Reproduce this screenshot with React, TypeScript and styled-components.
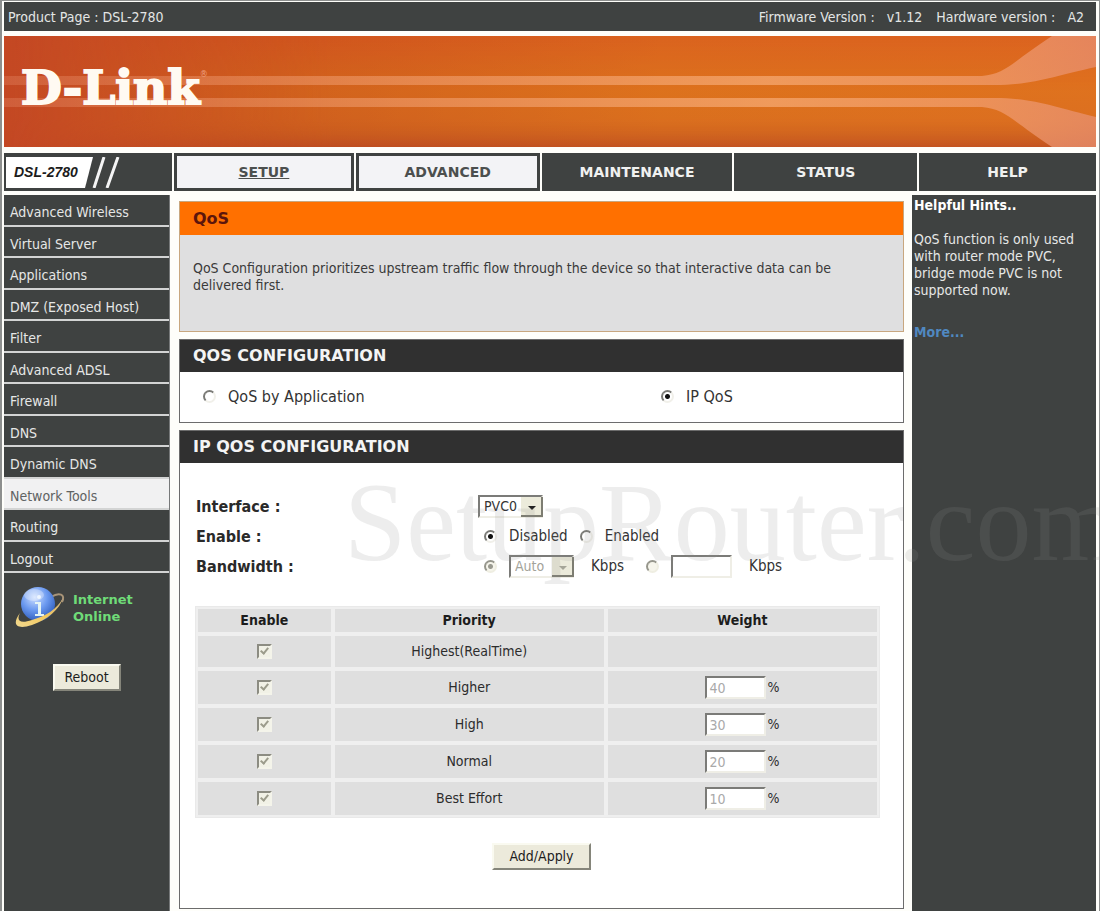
import React, { useState } from 'react';
import styled, { createGlobalStyle, css } from 'styled-components';

const ui = `"DejaVu Sans Condensed", Tahoma, "Noto Sans", sans-serif`;
const wide = `"DejaVu Sans", Verdana, sans-serif`;
const slate = '#3f4241';

const GlobalStyle = createGlobalStyle`
  *, *::before, *::after { box-sizing: border-box; }
  body { margin: 0; background: #fefefa; font: 14px/17px ${ui}; color: #333; }
  button, input, select { font: inherit; margin: 0; }
`;

const Page = styled.div`
  position: relative;
  display: flex;
  flex-direction: column;
  min-height: 100vh;
  overflow: hidden;
  padding: 1px 3px 0 2px;
  border-left: 2px solid #8d8f8e;
  border-right: 1px solid #8d8f8e;
  border-top: 1px solid #8d8f8e;
  background: #fefefa;
`;

const TopBar = styled.header`
  display: flex;
  justify-content: space-between;
  align-items: center;
  height: 29px;
  padding: 2px 12px 0 4px;
  background: ${slate};
  color: #e4e6e5;
`;

const Versions = styled.div`
  display: flex;
  gap: 14px;
`;

const Version = styled.span`
  display: flex;
  gap: 12px;
`;

const Banner = styled.div`
  position: relative;
  height: 111px;
  margin: 5px 0 6px;
`;

const BannerArt = styled.svg`
  display: block;
  width: 100%;
  height: 100%;
`;

const Logo = styled.a`
  position: absolute;
  left: 17px;
  top: 23px;
  display: flex;
  font: bold 47px/58px "DejaVu Serif", serif;
  color: #fffaf2;
  -webkit-text-stroke: 2px #fffaf2;
  text-decoration: none;
`;

const LogoMark = styled.span`
  font: 9px/12px ${ui};
  padding-top: 9px;
  color: #f0a080;
  -webkit-text-stroke: 0;
`;

const Nav = styled.nav`
  display: grid;
  grid-template-columns: 168px 180fr 184fr 191fr 183fr 177fr;
  gap: 2px;
  height: 38px;
  margin-bottom: 4px;
`;

const ModelCell = styled.div`
  padding: 4px 2px 3px;
  background: ${slate};
`;

const ModelPlate = styled.div`
  position: relative;
  height: 31px;
  padding-left: 8px;
  font: italic bold 14px/30px "Liberation Sans", Arial, sans-serif;
  color: #1c1c1c;
`;

const ModelArt = styled.svg`
  position: absolute;
  left: 0;
  top: 0;
`;

const ModelName = styled.span`
  position: relative;
`;

const Tab = styled.a<{ $light?: boolean; $current?: boolean }>`
  display: flex;
  align-items: center;
  justify-content: center;
  border: 3px solid ${slate};
  background: ${p => (p.$light ? '#f3f3f6' : slate)};
  color: ${p => (p.$light ? '#4c4f4e' : '#f0f1f0')};
  font: bold 14px/20px ${wide};
  text-decoration: ${p => (p.$current ? 'underline' : 'none')};
`;

const Body = styled.div`
  flex: 1;
  display: grid;
  grid-template-columns: 166px minmax(0, 1fr) 184px;
`;

const Sidebar = styled.aside`
  background: ${slate};
  border-right: 1px solid #77797a;
`;

const Menu = styled.ul`
  display: grid;
  grid-auto-rows: 1fr;
  height: 378px;
  margin: 0;
  padding: 0;
  list-style: none;
`;

const MenuItem = styled.li<{ $current: boolean }>`
  display: flex;
  border-bottom: 2px solid #d3d4d4;
  background: ${p => (p.$current ? '#f1f1f2' : slate)};
  a {
    flex: 1;
    padding: 9px 0 0 6px;
    color: ${p => (p.$current ? '#606363' : '#e6e7e6')};
    text-decoration: none;
  }
`;

const Connection = styled.div`
  display: flex;
  align-items: center;
  gap: 8px;
  padding: 12px 0 0 9px;
  font: bold 13px/17px ${wide};
  color: #6fdc78;
`;

const SidebarAction = styled.div`
  display: flex;
  justify-content: center;
  padding: 33px 0;
`;

const Button = styled.button<{ $wide?: boolean }>`
  height: 27px;
  width: ${p => (p.$wide ? 99 : 68)}px;
  padding: 0;
  border: 2px solid;
  border-color: #fafaf0 #85857a #85857a #fafaf0;
  background: #eceadb;
  color: #1d1d1d;
`;

const Main = styled.main`
  display: flex;
  flex-direction: column;
  gap: 7px;
  padding: 6px 8px 4px 9px;
`;

const Intro = styled.section`
  height: 131px;
  border: 1px solid #c8a77f;
  background: #dfdfe0;
`;

const IntroTitle = styled.h1`
  margin: 0;
  padding: 0 13px;
  background: #ff7000;
  color: #5c150c;
  font: bold 16px/33px ${wide};
`;

const IntroText = styled.p`
  margin: 0;
  padding: 25px 13px 0;
  color: #3a3a3a;
`;

const Panel = styled.section`
  border: 1px solid #6c6c6c;
  background: #fff;
`;

const PanelTitle = styled.h2`
  margin: 0;
  padding: 0 13px;
  background: #303030;
  color: #f4f4f4;
  font: bold 16px/32px ${wide};
`;

const ModeRow = styled.div`
  display: grid;
  grid-template-columns: 458px 1fr;
  align-items: center;
  height: 50px;
  padding: 0 0 2px 23px;
  font-size: 16px;
`;

const Choice = styled.label`
  display: flex;
  align-items: center;
  gap: 12px;
  white-space: nowrap;
`;

const Radio = styled.input.attrs({ type: 'radio' })`
  appearance: none;
  flex: none;
  width: 13px;
  height: 13px;
  border: 2px solid;
  border-color: #7a7a76 #f1f0ea #f1f0ea #7a7a76;
  border-radius: 50%;
  background: #fff;
  &:checked { background: radial-gradient(circle, #111 0 2px, #fff 3px); }
  &:disabled { background: #f6f5ec; border-color: #96968c #efeee2 #efeee2 #96968c; }
  &:disabled:checked { background: radial-gradient(circle, #9a9a90 0 2px, #f6f5ec 3px); }
`;

const Settings = styled.form`
  padding: 28px 23px 38px 15px;
`;

const Field = styled.div`
  display: grid;
  grid-template-columns: 282px 1fr;
  align-items: center;
  height: 30px;
  padding-left: 1px;
  font-size: 15px;
`;

const FieldName = styled.span`
  font-size: 16px;
  font-weight: bold;
  color: #2a2a2a;
`;

const Controls = styled.div<{ $inset?: boolean }>`
  display: flex;
  align-items: center;
  gap: 12px;
  padding-left: ${p => (p.$inset ? 6 : 0)}px;
`;

const Unit = styled.span`
  padding: 0 10px 0 5px;
`;

const SelectBox = styled.span`
  position: relative;
  display: block;
  width: 65px;
  height: 23px;
`;

const sunken = css`
  border: 2px solid;
  border-color: #7b7b78 #efeee6 #efeee6 #7b7b78;
  border-radius: 0;
  background: #fff;
`;

const Select = styled.select`
  appearance: none;
  width: 100%;
  height: 100%;
  padding: 0 0 0 4px;
  ${sunken}
  font-size: 14px;
  color: #333;
  &:disabled { color: #a3a39a; opacity: 1; }
`;

const Arrow = styled.svg`
  position: absolute;
  right: 0;
  top: 2px;
  pointer-events: none;
`;

const TextBox = styled.input.attrs({ type: 'text' })`
  width: 61px;
  height: 23px;
  padding: 0 2px;
  ${sunken}
  font-size: 14px;
  &:disabled { color: #a9a9a9; }
`;

const Table = styled.table`
  width: 100%;
  margin: 25px 0;
  table-layout: fixed;
  border: 1px solid #e9e9e9;
  border-spacing: 0;
  color: #2c2c2c;
  th, td {
    height: 37px;
    padding: 0;
    border: 2px solid #efefef;
    background: #dfdfdf;
    text-align: center;
  }
  th { height: 27px; color: #1c1c1c; }
  th:first-child { width: 20%; }
  tbody tr:first-child td { height: 35px; }
`;

const Check = styled.input.attrs({ type: 'checkbox' })`
  appearance: none;
  display: block;
  position: relative;
  width: 15px;
  height: 15px;
  margin: 0 auto;
  border: 2px solid;
  border-color: #8c8c82 #f4f4ea #f4f4ea #8c8c82;
  background: #f1f1e6;
  &:checked::before {
    content: '';
    position: absolute;
    left: 3px;
    top: 0;
    width: 5px;
    height: 8px;
    border: solid #9c9c8c;
    border-width: 0 2px 2px 0;
    transform: rotate(40deg);
  }
`;

const Weight = styled.label`
  display: flex;
  align-items: center;
  justify-content: center;
  gap: 1px;
`;

const Submit = styled.div`
  display: flex;
  justify-content: center;
  padding-left: 8px;
`;

const Hints = styled.aside`
  padding: 2px 12px 0 2px;
  background: ${slate};
  color: #e6e7e6;
`;

const HintsTitle = styled.h2`
  margin: 0;
  font: bold 14px/17px ${ui};
  color: #fff;
`;

const HintsText = styled.p`
  margin: 17px 0 25px;
`;

const More = styled.a`
  font-weight: bold;
  color: #5088c0;
  text-decoration: none;
`;

const Watermark = styled.div`
  position: absolute;
  left: 342px;
  top: 457px;
  font: 112px/128px "Liberation Serif", "Times New Roman", serif;
  white-space: nowrap;
  color: rgba(140, 140, 140, 0.16);
  pointer-events: none;
`;

const menu = [
  'Advanced Wireless', 'Virtual Server', 'Applications', 'DMZ (Exposed Host)', 'Filter', 'Advanced ADSL',
  'Firewall', 'DNS', 'Dynamic DNS', 'Network Tools', 'Routing', 'Logout',
];

const queues = [
  { name: 'Highest(RealTime)', weight: '' },
  { name: 'Higher', weight: '40' },
  { name: 'High', weight: '30' },
  { name: 'Normal', weight: '20' },
  { name: 'Best Effort', weight: '10' },
];

function BannerBackdrop() {
  return (
    <BannerArt viewBox="0 0 1092 111" preserveAspectRatio="none" aria-hidden="true">
      <defs>
        <linearGradient id="base" x1="0" x2="1" y1="0" y2="0">
          <stop offset="0" stopColor="#c44824" />
          <stop offset="0.25" stopColor="#c9511f" />
          <stop offset="0.6" stopColor="#db6a20" />
          <stop offset="1" stopColor="#de6a22" />
        </linearGradient>
        <linearGradient id="glow" x1="0" x2="0" y1="0" y2="1">
          <stop offset="0" stopColor="#d9581c" stopOpacity="0.4" />
          <stop offset="0.5" stopColor="#e08018" stopOpacity="0.35" />
          <stop offset="0.75" stopColor="#d9781c" stopOpacity="0.35" />
          <stop offset="1" stopColor="#b84a20" stopOpacity="0.7" />
        </linearGradient>
        <linearGradient id="fade" x1="0" x2="1" y1="0" y2="0">
          <stop offset="0" stopColor="#fff" stopOpacity="0" />
          <stop offset="0.3" stopColor="#fff" stopOpacity="1" />
        </linearGradient>
        <mask id="right"><rect width="1092" height="111" fill="url(#fade)" /></mask>
        <linearGradient id="band" x1="0" x2="1092" y1="0" y2="0" gradientUnits="userSpaceOnUse">
          <stop offset="0" stopColor="#f2a080" stopOpacity="0.25" />
          <stop offset="0.4" stopColor="#f2a070" stopOpacity="0.6" />
          <stop offset="0.7" stopColor="#f6a870" stopOpacity="0.75" />
          <stop offset="0.88" stopColor="#f3a070" stopOpacity="0.7" />
          <stop offset="1" stopColor="#e89070" stopOpacity="0.75" />
        </linearGradient>
      </defs>
      <rect width="1092" height="111" fill="url(#base)" />
      <rect width="1092" height="111" fill="url(#glow)" mask="url(#right)" />
      <path d="M0 40H978C1002 38 1008 26 1048 0H1092V31C1050 40 1030 49 990 49H0Z" fill="url(#band)" />
      <path d="M0 71H978C1002 73 1008 85 1048 111H1092V81C1050 71 1030 62 990 62H0Z" fill="url(#band)" />
    </BannerArt>
  );
}

function Globe() {
  return (
    <svg width="52" height="46" viewBox="0 0 52 46" aria-hidden="true">
      <defs>
        <radialGradient id="ball" cx="0.4" cy="0.3" r="0.75">
          <stop offset="0" stopColor="#cfe0ff" />
          <stop offset="0.5" stopColor="#6c9af0" />
          <stop offset="1" stopColor="#2a58b8" />
        </radialGradient>
        <linearGradient id="ring" x1="0" x2="1" y1="1" y2="0">
          <stop offset="0" stopColor="#f0d890" />
          <stop offset="0.5" stopColor="#f5c95c" />
          <stop offset="1" stopColor="#c9ae84" />
        </linearGradient>
      </defs>
      <path d="M38 12C46 7 53 9 49 17" fill="none" stroke="#a89478" strokeWidth="2" />
      <circle cx="25" cy="19" r="17" fill="url(#ball)" />
      <ellipse cx="21" cy="10" rx="10" ry="6" fill="#fff" opacity="0.3" />
      <circle cx="26" cy="12" r="2" fill="#eef6ff" />
      <path d="M22 17h6v12h3v2h-9v-2h3v-10h-3z" fill="#e4f4f4" />
      <path d="M7 28C-2 40 4 45 19 40C34 35 47 24 50 13C44 24 33 31 19 35C7 39 3 36 7 28Z" fill="url(#ring)" />
    </svg>
  );
}

function DropArrow({ muted }: { muted?: boolean }) {
  return (
    <Arrow width="22" height="20" viewBox="0 0 22 20" aria-hidden="true">
      <rect width="22" height="20" fill="#ecebdb" />
      <path d="M21 0V19H0" fill="none" stroke="#7d7d72" strokeWidth="2" />
      <path d="M7 9h8l-4 4z" fill={muted ? '#a6a698' : '#222'} />
    </Arrow>
  );
}

export default function App() {
  const [mode, setMode] = useState('ip');
  const [enabled, setEnabled] = useState(false);
  return (
    <Page>
      <GlobalStyle />
      <TopBar>
        <span>Product Page : DSL-2780</span>
        <Versions>
          <Version><span>Firmware Version :</span><span>v1.12</span></Version>
          <Version><span>Hardware version :</span><span>A2</span></Version>
        </Versions>
      </TopBar>
      <Banner>
        <BannerBackdrop />
        <Logo href="#home">D-Link<LogoMark>®</LogoMark></Logo>
      </Banner>
      <Nav>
        <ModelCell>
          <ModelPlate>
            <ModelArt width="130" height="31" viewBox="0 0 130 31" aria-hidden="true">
              <path d="M0 0H87L79 31H0Z" fill="#fff" />
              <path d="M98 0L88 31M112 0L101 31" stroke="#f4f4f4" strokeWidth="3" />
            </ModelArt>
            <ModelName>DSL-2780</ModelName>
          </ModelPlate>
        </ModelCell>
        <Tab href="#setup" $light $current>SETUP</Tab>
        <Tab href="#advanced" $light>ADVANCED</Tab>
        <Tab href="#maintenance">MAINTENANCE</Tab>
        <Tab href="#status">STATUS</Tab>
        <Tab href="#help">HELP</Tab>
      </Nav>
      <Body>
        <Sidebar>
          <Menu>
            {menu.map(item => (
              <MenuItem key={item} $current={item === 'Network Tools'}>
                <a href="#menu">{item}</a>
              </MenuItem>
            ))}
          </Menu>
          <Connection>
            <Globe />
            <span>Internet<br />Online</span>
          </Connection>
          <SidebarAction><Button type="button">Reboot</Button></SidebarAction>
        </Sidebar>
        <Main>
          <Intro>
            <IntroTitle>QoS</IntroTitle>
            <IntroText>
              QoS Configuration prioritizes upstream traffic flow through the device so that interactive data can be
              delivered first.
            </IntroText>
          </Intro>
          <Panel>
            <PanelTitle>QOS CONFIGURATION</PanelTitle>
            <ModeRow>
              <Choice>
                <Radio name="mode" checked={mode === 'app'} onChange={() => setMode('app')} />
                QoS by Application
              </Choice>
              <Choice>
                <Radio name="mode" checked={mode === 'ip'} onChange={() => setMode('ip')} />
                IP QoS
              </Choice>
            </ModeRow>
          </Panel>
          <Panel>
            <PanelTitle>IP QOS CONFIGURATION</PanelTitle>
            <Settings onSubmit={e => e.preventDefault()}>
              <Field>
                <FieldName as="label" htmlFor="interface">Interface :</FieldName>
                <Controls>
                  <SelectBox>
                    <Select id="interface" defaultValue="PVC0"><option>PVC0</option></Select>
                    <DropArrow />
                  </SelectBox>
                </Controls>
              </Field>
              <Field role="group" aria-label="Enable">
                <FieldName>Enable :</FieldName>
                <Controls $inset>
                  <Choice>
                    <Radio name="enable" checked={!enabled} onChange={() => setEnabled(false)} />
                    Disabled
                  </Choice>
                  <Choice>
                    <Radio name="enable" checked={enabled} onChange={() => setEnabled(true)} />
                    Enabled
                  </Choice>
                </Controls>
              </Field>
              <Field role="group" aria-label="Bandwidth">
                <FieldName>Bandwidth :</FieldName>
                <Controls $inset>
                  <Radio name="bandwidth" aria-label="Automatic bandwidth" defaultChecked disabled />
                  <SelectBox>
                    <Select aria-label="Bandwidth preset" defaultValue="Auto" disabled><option>Auto</option></Select>
                    <DropArrow muted />
                  </SelectBox>
                  <Unit>Kbps</Unit>
                  <Radio name="bandwidth" aria-label="Custom bandwidth" disabled />
                  <TextBox aria-label="Custom bandwidth in Kbps" disabled />
                  <Unit>Kbps</Unit>
                </Controls>
              </Field>
              <Table>
                <thead>
                  <tr><th>Enable</th><th>Priority</th><th>Weight</th></tr>
                </thead>
                <tbody>
                  {queues.map(q => (
                    <tr key={q.name}>
                      <td><Check aria-label={`Enable ${q.name}`} defaultChecked disabled /></td>
                      <td>{q.name}</td>
                      <td>
                        {q.weight && (
                          <Weight>
                            <TextBox aria-label={`${q.name} weight`} defaultValue={q.weight} disabled />%
                          </Weight>
                        )}
                      </td>
                    </tr>
                  ))}
                </tbody>
              </Table>
              <Submit><Button type="submit" $wide>Add/Apply</Button></Submit>
            </Settings>
          </Panel>
        </Main>
        <Hints>
          <HintsTitle>Helpful Hints..</HintsTitle>
          <HintsText>
            QoS function is only used with router mode PVC, bridge mode PVC is not supported now.
          </HintsText>
          <More href="#more">More...</More>
        </Hints>
      </Body>
      <Watermark aria-hidden="true">SetupRouter.com</Watermark>
    </Page>
  );
}
